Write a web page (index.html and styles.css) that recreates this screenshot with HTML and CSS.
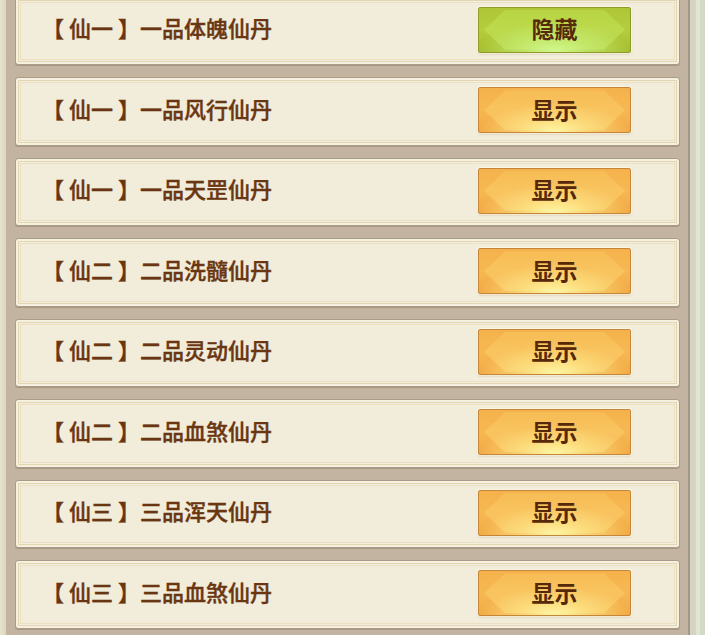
FILE: index.html
```html
<!DOCTYPE html>
<html lang="zh">
<head>
<meta charset="utf-8">
<title>仙丹列表</title>
<link rel="stylesheet" href="styles.css">
</head>
<body>
<div class="frame">
  <div class="edge-left"></div>
  <div class="panel">
    <ul class="list">
      <li class="card"><span class="name">【 仙一 】一品体魄仙丹</span><button class="btn btn-hide"><span class="label">隐藏</span></button></li>
      <li class="card"><span class="name">【 仙一 】一品风行仙丹</span><button class="btn btn-show"><span class="label">显示</span></button></li>
      <li class="card"><span class="name">【 仙一 】一品天罡仙丹</span><button class="btn btn-show"><span class="label">显示</span></button></li>
      <li class="card"><span class="name">【 仙二 】二品洗髓仙丹</span><button class="btn btn-show"><span class="label">显示</span></button></li>
      <li class="card"><span class="name">【 仙二 】二品灵动仙丹</span><button class="btn btn-show"><span class="label">显示</span></button></li>
      <li class="card"><span class="name">【 仙二 】二品血煞仙丹</span><button class="btn btn-show"><span class="label">显示</span></button></li>
      <li class="card"><span class="name">【 仙三 】三品浑天仙丹</span><button class="btn btn-show"><span class="label">显示</span></button></li>
      <li class="card"><span class="name">【 仙三 】三品血煞仙丹</span><button class="btn btn-show"><span class="label">显示</span></button></li>
    </ul>
  </div>
  <div class="edge-line"></div>
  <div class="edge-right"></div>
</div>
</body>
</html>
```

FILE: styles.css
```css
html, body {
  margin: 0;
  padding: 0;
  height: 635px;
  overflow: hidden;
}

body {
  font-family: "Noto Sans CJK SC", "Noto Sans", sans-serif;
  background: #e2dfc8;
}

.frame {
  display: flex;
  height: 635px;
}

.edge-left {
  width: 6px;
  background: linear-gradient(90deg, #e6e3cc, #dcd8bf);
  flex: none;
}

.panel {
  flex: 1;
  background: #c3b3a1;
  padding: 0 8px 0 9px;
  overflow: hidden;
}

.edge-line {
  width: 2px;
  flex: none;
  background: #a3958a;
}

.edge-right {
  width: 15px;
  flex: none;
  background: linear-gradient(90deg, #d3d5c0 0, #d3d5c0 6px, #e3e5d3 6px, #e3e5d3 10px, #d2dbc6 10px, #cfd9c4 15px);
}

.list {
  list-style: none;
  margin: -3.5px 0 0;
  padding: 0;
  display: flex;
  flex-direction: column;
  gap: 12px;
}

.card {
  height: 68.5px;
  box-sizing: border-box;
  display: flex;
  align-items: center;
  justify-content: space-between;
  padding: 0 48px 0 26px;
  background: #f2ecda;
  border: 1px solid #ab9c86;
  border-radius: 3px;
  box-shadow:
    inset 0 0 0 2px #f5f0e0,
    inset 0 0 0 3px #e2d5b0,
    inset 0 0 0 4px #f3eedd,
    inset 0 0 0 5px #ebe0c2,
    0 1px 0 #a89682;
}

.name {
  font-size: 22px;
  font-weight: 500;
  color: #6a3612;
  -webkit-text-stroke: 0.4px #6a3612;
  white-space: pre;
  line-height: 1;
  margin-bottom: 7px;
}

.btn {
  position: relative;
  width: 153px;
  height: 46px;
  margin-bottom: 2px;
  border-radius: 2px;
  font-family: "Noto Sans CJK SC", "Noto Sans", sans-serif;
  font-size: 23px;
  font-weight: 700;
  color: #56290a;
  line-height: 1;
  padding: 0 0 2px;
  cursor: pointer;
  overflow: hidden;
  box-shadow: 0 0 0 1px rgba(255, 250, 230, 0.7), 0 1px 2px rgba(120, 90, 50, 0.35);
}

.label {
  position: relative;
  z-index: 2;
}

.btn::before {
  content: "";
  position: absolute;
  left: 5px;
  right: 5px;
  top: 2px;
  bottom: 2px;
  clip-path: polygon(15% 0, 85% 0, 100% 50%, 85% 100%, 15% 100%, 0 50%);
  pointer-events: none;
  z-index: 0;
}

.btn::after {
  content: "";
  position: absolute;
  left: 0;
  right: 0;
  bottom: 0;
  height: 65%;
  pointer-events: none;
  z-index: 1;
}

.btn-show {
  border: 1px solid #c4873a;
  background: linear-gradient(180deg, #f5b24c 0%, #f6b852 50%, #f2a944 100%);
}

.btn-show::before {
  background: linear-gradient(180deg, rgba(250, 200, 95, 0.45), rgba(255, 225, 130, 0.4));
}

.btn-show::after {
  background: radial-gradient(ellipse 50% 100% at 50% 100%, rgba(255, 250, 170, 0.95) 0%, rgba(255, 238, 145, 0.6) 45%, rgba(255, 225, 130, 0) 100%);
}

.btn-hide {
  border: 1px solid #8c9b2a;
  background: linear-gradient(180deg, #afc736 0%, #b4cd3c 50%, #a6bd2e 100%);
}

.btn-hide::before {
  background: linear-gradient(180deg, rgba(195, 228, 85, 0.45), rgba(205, 242, 115, 0.4));
}

.btn-hide::after {
  background: radial-gradient(ellipse 50% 100% at 50% 100%, rgba(212, 252, 148, 0.95) 0%, rgba(203, 245, 128, 0.6) 45%, rgba(200, 240, 120, 0) 100%);
}
```
